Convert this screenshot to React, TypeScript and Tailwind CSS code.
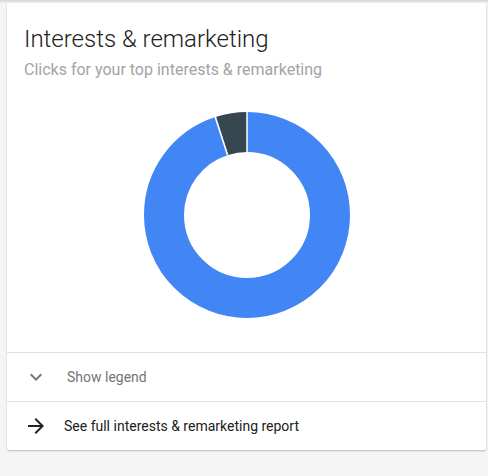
function Donut() {
  const r = 83
  const c = 2 * Math.PI * r
  const dark = 0.05
  const sepAngle = (1 - dark) * 360 - 90
  const rad = (sepAngle * Math.PI) / 180
  return (
    <svg width="206" height="206" viewBox="0 0 206 206">
      <g transform="rotate(-90 103 103)">
        <circle cx="103" cy="103" r={r} fill="none" stroke="#4285f4" strokeWidth="40" strokeDasharray={`${c * (1 - dark)} ${c}`} />
        <circle cx="103" cy="103" r={r} fill="none" stroke="#37474f" strokeWidth="40" strokeDasharray={`${c * dark} ${c}`} strokeDashoffset={-c * (1 - dark)} />
      </g>
      <line x1="103" y1="0" x2="103" y2="40" stroke="#fff" strokeWidth="1.5" />
      <line
        x1={103 + 63 * Math.cos(rad)}
        y1={103 + 63 * Math.sin(rad)}
        x2={103 + 103 * Math.cos(rad)}
        y2={103 + 103 * Math.sin(rad)}
        stroke="#fff"
        strokeWidth="1.5"
      />
    </svg>
  )
}

export default function App() {
  return (
    <div className="min-h-screen bg-[#f5f5f5] pt-[3px] font-['Roboto',sans-serif] relative">
      <div className="absolute top-0 left-0 right-0 h-[3px] bg-gradient-to-b from-[#d4d4d4] to-[#f0f0f0]" />
      <div className="ml-[7px] mr-[2px] bg-white rounded-[2px] shadow-[0_1px_2px_rgba(0,0,0,0.25)]">
        <div className="px-[17px] pt-[21px]">
          <h2 className="text-[24px] font-light leading-[30px] text-[#212121]">Interests &amp; remarketing</h2>
          <p className="mt-[6px] text-[16px] leading-[20px] text-[#a3a3a3]">Clicks for your top interests &amp; remarketing</p>
        </div>
        <div className="flex justify-center pt-[32px] pb-[34px]">
          <Donut />
        </div>
        <div className="border-t border-[#e0e0e0] h-[49px] flex items-center pl-[17px]">
          <svg width="24" height="24" viewBox="0 0 24 24" fill="#757575">
            <path d="M16.59 8.59L12 13.17 7.41 8.59 6 10l6 6 6-6z" />
          </svg>
          <span className="ml-[19px] text-[14px] text-[#757575]">Show legend</span>
        </div>
        <div className="border-t border-[#e0e0e0] h-[49px] flex items-center pl-[17px]">
          <svg width="24" height="24" viewBox="0 0 24 24" fill="#212121">
            <path d="M12 4l-1.41 1.41L16.17 11H4v2h12.17l-5.58 5.59L12 20l8-8z" />
          </svg>
          <span className="ml-[16px] text-[14px] text-[#212121]">See full interests &amp; remarketing report</span>
        </div>
      </div>
    </div>
  )
}
